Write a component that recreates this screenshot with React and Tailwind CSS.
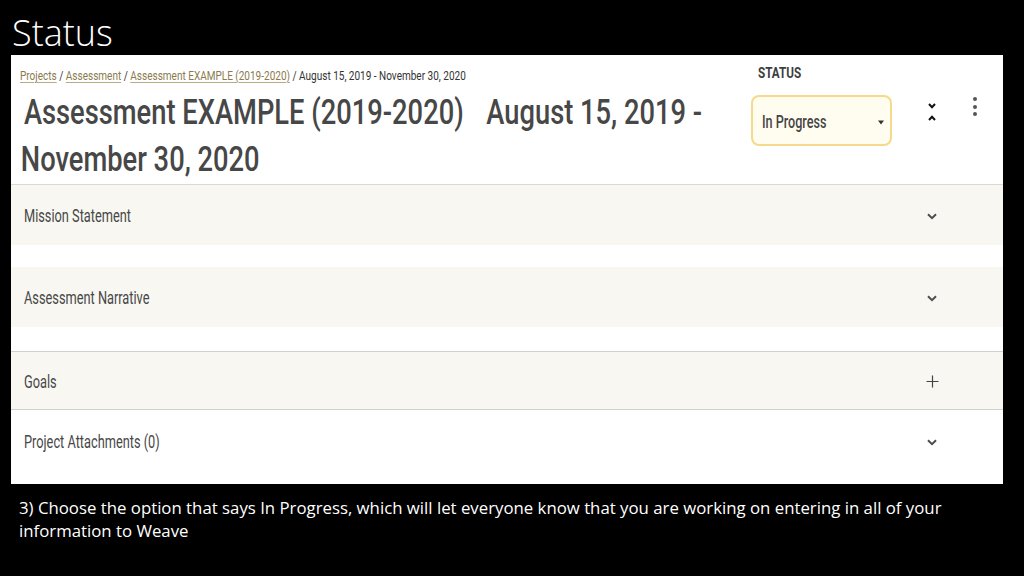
import { Plus } from 'lucide-react'

const appFont = { fontFamily: 'Roboto, "Liberation Sans", sans-serif' }

function Crumb({ children }) {
    return <a className="text-[#8a7a4e] underline underline-offset-2 decoration-[#b9ab82]">{children}</a>
}

function Row({ title, icon = 'chevron', bg = 'bg-[#f8f7f2]', h = 'h-[60px]', tail, border }) {
    return (
        <div className={border ? 'border-b border-[#d2d2cd]' : ''}>
            <div className={`flex items-center justify-between pt-[2px] pl-[13px] pr-[59px] ${h} ${bg}`}>
                <span className="inline-block whitespace-nowrap origin-left scale-x-[0.71] text-[18px] leading-[22px] text-[#474747]">{title}</span>
                <span className="w-[24px] flex justify-center">
                    {icon === 'plus' ? (
                        <Plus className="w-[19px] h-[19px] text-[#444]" strokeWidth={1.5} />
                    ) : (
                        <svg width="10" height="7" viewBox="0 0 10 7">
                            <path d="M1 1.2 L5 5.2 L9 1.2" fill="none" stroke="#4d4d4d" strokeWidth="2" />
                        </svg>
                    )}
                </span>
            </div>
            {tail && <div style={{ height: tail }} className="bg-white" />}
        </div>
    )
}

export default function App() {
    return (
        <div className="w-[1024px] h-[576px] bg-black overflow-hidden flex flex-col">
            <div className="h-[55px] pl-[12px] pt-[12px]">
                <h1 className="text-white text-[36px] leading-[42px] font-light" style={{ fontFamily: '"Open Sans", sans-serif' }}>
                    Status
                </h1>
            </div>

            <div className="ml-[11px] w-[992px] h-[429px] bg-white flex flex-col" style={appFont}>
                <header className="flex h-[130px] border-b border-[#dadad5]">
                    <div className="flex-1 min-w-0 pl-[9px] pt-[13px]">
                        <div className="whitespace-nowrap origin-left scale-x-[0.77] text-[13px] leading-[16px] text-[#333]">
                            <Crumb>Projects</Crumb> / <Crumb>Assessment</Crumb> / <Crumb>Assessment EXAMPLE (2019-2020)</Crumb> / August 15, 2019 - November 30, 2020
                        </div>
                        <h2 className="mt-[5px] origin-left scale-x-[0.78] text-[35px] leading-[47px] text-[#474747] font-medium whitespace-nowrap">
                            <div className="pl-[5px]">
                                <span>Assessment EXAMPLE (2019-2020)</span>
                                <span className="pl-[29px]">August 15, 2019 -</span>
                            </div>
                            <div className="pl-[1px]">November 30, 2020</div>
                        </h2>
                    </div>

                    <div className="flex shrink-0 items-start pr-[26px]">
                        <div className="w-[141px] pt-[10px]">
                            <div className="pl-[9px] origin-left scale-x-[0.78] text-[15px] leading-[16px] font-bold text-[#3d3d3d]">STATUS</div>
                            <div className="mt-[14px] h-[51px] rounded-[8px] border-2 border-[#f4da8a] bg-[#fffcf0] flex items-center justify-between pl-[9px] pr-[6px]">
                                <span className="inline-block pt-[2px] origin-left scale-x-[0.7] text-[18px] leading-[22px] font-medium text-[#454545] whitespace-nowrap">In Progress</span>
                                <svg width="6" height="5" viewBox="0 0 6 5" className="mt-[3px] shrink-0">
                                    <path d="M0 0.5 H6 L3 4.5 Z" fill="#333" />
                                </svg>
                            </div>
                        </div>
                        <div className="ml-[36px] mt-[48px] flex flex-col items-center gap-[6px]">
                            <svg width="8" height="6" viewBox="0 0 8 6">
                                <path d="M1 1 L4 4.2 L7 1" fill="none" stroke="#111" strokeWidth="2" />
                            </svg>
                            <svg width="8" height="6" viewBox="0 0 8 6">
                                <path d="M1 5 L4 1.8 L7 5" fill="none" stroke="#111" strokeWidth="2" />
                            </svg>
                        </div>
                        <div className="ml-[37px] mt-[42px] flex flex-col items-center gap-[3.5px]">
                            <span className="w-[4px] h-[4px] rounded-full bg-[#555]" />
                            <span className="w-[4px] h-[4px] rounded-full bg-[#555]" />
                            <span className="w-[4px] h-[4px] rounded-full bg-[#555]" />
                        </div>
                    </div>
                </header>

                <Row title="Mission Statement" tail={22} />
                <Row title="Assessment Narrative" tail={24} border />
                <Row title="Goals" icon="plus" h="h-[57px]" border />
                <Row title="Project Attachments (0)" bg="bg-white" h="h-[62px]" />
            </div>

            <p className="mt-[12px] pl-[19px] pr-[60px] text-white text-[16.8px] leading-[23px]" style={{ fontFamily: '"Open Sans", sans-serif' }}>
                3) Choose the option that says In Progress, which will let everyone know that you are working on entering in all of your information to Weave
            </p>
        </div>
    )
}
